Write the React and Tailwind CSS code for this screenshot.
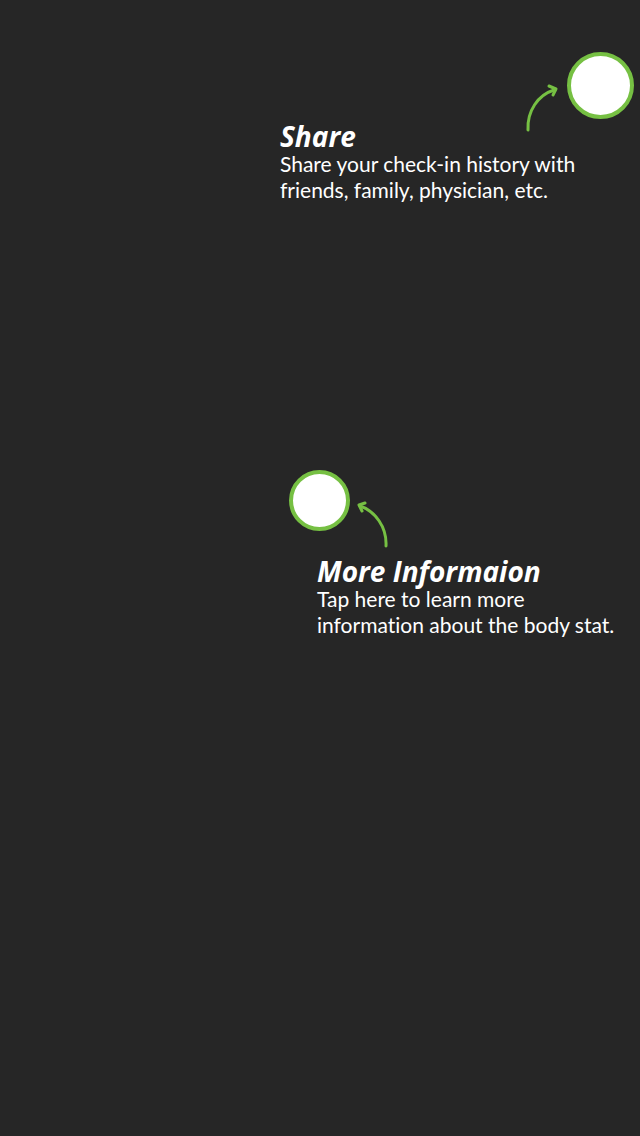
function Callout({ title, lines, className }) {
  return (
    <div className={className}>
      <h2 className="font-['Open_Sans','Noto_Sans',sans-serif] text-[28px] leading-[30px] font-bold italic">{title}</h2>
      <p className="text-[21px] leading-[26px] whitespace-nowrap [font-variant-ligatures:none]">
        {lines[0]}
        <br />
        {lines[1]}
      </p>
    </div>
  );
}

export default function App() {
  return (
    <main className="min-h-screen overflow-hidden bg-[#262626] pt-[52px] font-['Lato','Open_Sans',sans-serif] text-white">
      <section className="ml-auto w-[360px]">
        <div className="flex h-[67px] items-start justify-end gap-2 pr-[6px]">
          <svg className="h-20 w-9 shrink-0" viewBox="0 0 36 80" fill="none" stroke="#76c043" strokeWidth="3" aria-hidden="true">
            <path d="M5 78C4 59 15 43 31 38" strokeLinecap="round" />
            <path d="M26 34L33 37L30 43" strokeLinecap="round" strokeLinejoin="round" />
          </svg>
          <button type="button" aria-label="Share" className="size-[67px] shrink-0 rounded-full border-4 border-[#76c043] bg-white" />
        </div>
        <Callout
          className="mt-[2px]"
          title="Share"
          lines={["Share your check-in history with", "friends, family, physician, etc."]}
        />
      </section>
      <section className="mt-[267px] ml-auto w-[351px]">
        <div className="flex h-[61px] items-start gap-1">
          <button type="button" aria-label="More information" className="size-[61px] shrink-0 rounded-full border-4 border-[#76c043] bg-white" />
          <svg className="h-[78px] w-9 shrink-0" viewBox="0 0 36 78" fill="none" stroke="#76c043" strokeWidth="3" aria-hidden="true">
            <path d="M32 76C33 57 21 41 6 36" strokeLinecap="round" />
            <path d="M11 33L5 35L8 41" strokeLinecap="round" strokeLinejoin="round" />
          </svg>
        </div>
        <Callout
          className="mt-[25px] pl-[28px]"
          title="More Informaion"
          lines={["Tap here to learn more", "information about the body stat."]}
        />
      </section>
    </main>
  );
}
